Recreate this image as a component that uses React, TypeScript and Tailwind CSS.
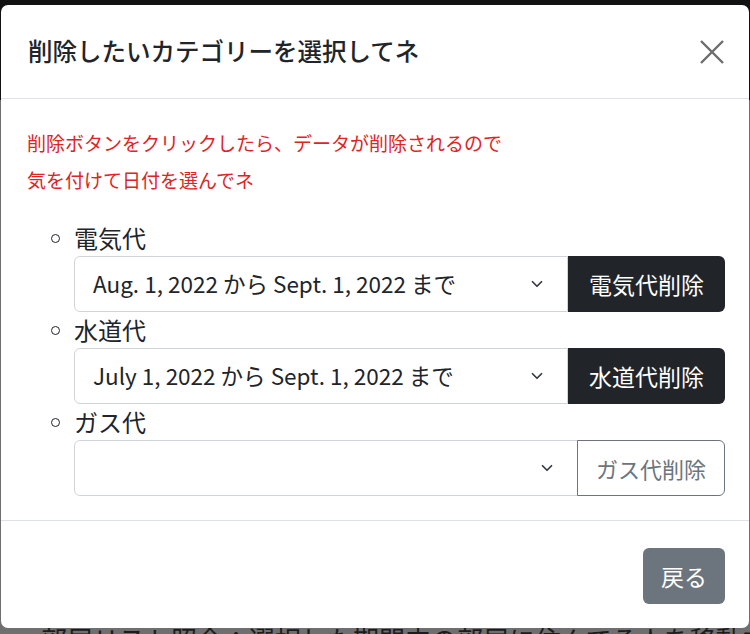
import { ChevronDown } from "lucide-react";

const font = { fontFamily: '"Noto Sans CJK JP", "Noto Sans", sans-serif' };

const rows = [
  { label: "電気代", value: "Aug. 1, 2022 から Sept. 1, 2022 まで", button: "電気代削除", active: true },
  { label: "水道代", value: "July 1, 2022 から Sept. 1, 2022 まで", button: "水道代削除", active: true },
  { label: "ガス代", value: "", button: "ガス代削除", active: false },
];

const CloseIcon = () => (
  <svg width="26" height="26" viewBox="0 0 26 26" className="text-[#6c6c6c]">
    <path d="M2 2 L24 24 M24 2 L2 24" stroke="currentColor" strokeWidth="2.4" fill="none" />
  </svg>
);

export default function App() {
  return (
    <div className="relative w-[750px] h-[634px] overflow-hidden bg-[#121212]" style={font}>
      {/* page behind the backdrop */}
      <div className="flex flex-col h-full">
        <div className="h-[100px] bg-[#121212]"></div>
        <div className="flex-1 bg-[#6f6f6f] flex flex-col justify-end">
          <p className="pl-[41px] text-[26px] leading-[26px] text-[#1c1c1c] translate-y-[18px] whitespace-nowrap">
            部屋リスト照会：選択した期間内の部屋に住んでる人を移動する
          </p>
        </div>
      </div>

      {/* modal */}
      <div className="absolute left-[1px] top-[5px] w-[748px] h-[623px] bg-white rounded-[7px] flex flex-col text-[#212529]">
        <div className="h-[94px] flex items-center justify-between pl-[27px] pr-[24px] border-b border-[#dee2e6]">
          <h5 className="text-[24.5px] font-medium leading-none">削除したいカテゴリーを選択してネ</h5>
          <CloseIcon />
        </div>

        <div className="pl-[26px] pr-[24px] pt-[25px] pb-[24px] border-b border-[#dee2e6]">
          <p className="text-[19px] leading-[37px] text-[#e02424]">
            削除ボタンをクリックしたら、データが削除されるので
            <br />
            気を付けて日付を選んでネ
          </p>
          <div className="mt-[22px] pl-[47px] flex flex-col">
            {rows.map((r) => (
              <div key={r.label} className="flex flex-col">
                <div className="relative h-[36px] flex items-center text-[24px] leading-none">
                  <span className="absolute -left-[23px] top-[14px] w-[9px] h-[9px] rounded-full border border-[#212529]"></span>
                  {r.label}
                </div>
                <div className="flex h-[56px]">
                  <div className="flex-1 flex items-center justify-between pl-[18px] pr-[21px] border border-[#ced4da] rounded-l-[6px] text-[22.5px]">
                    <span>{r.value}</span>
                    <ChevronDown className="w-[18px] h-[18px] text-[#343a40]" strokeWidth={2.3} />
                  </div>
                  {r.active ? (
                    <button className="px-[21px] bg-[#212529] text-white text-[23px] rounded-r-[6px]">
                      {r.button}
                    </button>
                  ) : (
                    <button className="px-[18px] border border-[#6c757d] text-[#6c757d] text-[22px] rounded-r-[6px] -ml-px">
                      {r.button}
                    </button>
                  )}
                </div>
              </div>
            ))}
          </div>
        </div>

        <div className="flex-1 flex items-start justify-end pt-[27px] pr-[24px]">
          <button className="h-[56px] px-[18px] bg-[#6c757d] text-white text-[23px] rounded-[6px]">戻る</button>
        </div>
      </div>
    </div>
  );
}
